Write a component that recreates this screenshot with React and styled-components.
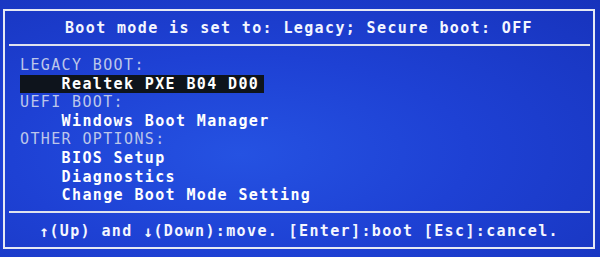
import styled, { createGlobalStyle } from 'styled-components';

const GlobalStyle = createGlobalStyle`
  html, body {
    margin: 0;
    padding: 0;
    width: 600px;
    height: 257px;
    overflow: hidden;
    background: radial-gradient(ellipse at 40% 60%, #2552e2 0%, #1e41d4 45%, #1733bc 100%);
  }
`;

const CHAR = 10.4;

const Screen = styled.div`
  width: 600px;
  height: 257px;
  padding: 9px 5px 8px 3px;
  box-sizing: border-box;
  font-family: 'DejaVu Sans Mono', 'Liberation Mono', monospace;
  font-size: 15px;
  letter-spacing: 1.37px;
  color: #f4f6ff;
`;

const Frame = styled.div`
  height: 100%;
  border: 2px solid #e6e9f4;
  box-sizing: border-box;
  display: flex;
  flex-direction: column;
`;

const Header = styled.div`
  height: 33px;
  display: flex;
  align-items: center;
  justify-content: center;
  font-weight: bold;
  white-space: pre;
`;

const Rule = styled.div`
  height: 2px;
  margin: 0 3px 0 4px;
  background: #dfe2ee;
`;

const Menu = styled.div`
  flex: 1;
  padding: 10px 0 0 15px;
`;

const Line = styled.div`
  height: 18.6px;
  line-height: 18.6px;
  white-space: pre;
`;

const Label = styled(Line)`
  color: #bcc6ea;
`;

const Item = styled(Line)`
  width: ${({ $selected }) => ($selected ? '244px' : 'auto')};
  padding-left: ${4 * CHAR}px;
  box-sizing: border-box;
  font-weight: bold;
  color: #ffffff;
  background: ${({ $selected }) => ($selected ? '#0e141c' : 'transparent')};
`;

const Footer = styled.div`
  height: 34px;
  padding-top: 2px;
  box-sizing: border-box;
  display: flex;
  align-items: center;
  justify-content: center;
  font-weight: bold;
  white-space: pre;
`;

const Arrow = styled.span`
  display: inline-block;
  width: ${CHAR}px;
  text-align: center;
  font-size: 16px;
  letter-spacing: 0;
`;

const sections = [
  { title: 'LEGACY BOOT:', items: ['Realtek PXE B04 D00'] },
  { title: 'UEFI BOOT:', items: ['Windows Boot Manager'] },
  { title: 'OTHER OPTIONS:', items: ['BIOS Setup', 'Diagnostics', 'Change Boot Mode Setting'] },
];

const App = () => (
  <>
    <GlobalStyle />
    <Screen>
      <Frame>
        <Header>Boot mode is set to: Legacy; Secure boot: OFF</Header>
        <Rule />
        <Menu>
          {sections.map((section) => (
            <div key={section.title}>
              <Label>{section.title}</Label>
              {section.items.map((item) => (
                <Item key={item} $selected={item === 'Realtek PXE B04 D00'}>
                  {item}
                </Item>
              ))}
            </div>
          ))}
        </Menu>
        <Rule />
        <Footer>
          <Arrow>↑</Arrow>(Up) and <Arrow>↓</Arrow>(Down):move. [Enter]:boot [Esc]:cancel.
        </Footer>
      </Frame>
    </Screen>
  </>
);

export default App;
